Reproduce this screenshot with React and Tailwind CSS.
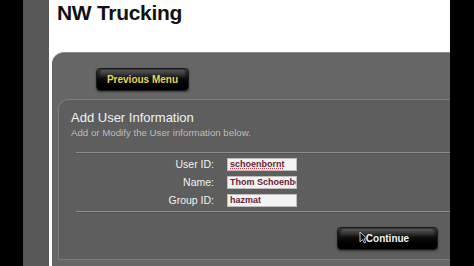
import React from 'react';

const fields = [
    { label: 'User ID:', value: 'schoenbornt', flagged: true },
    { label: 'Name:', value: 'Thom Schoenborn' },
    { label: 'Group ID:', value: 'hazmat' },
];

function GlossButton({ children, className }) {
    return (
        <div
            className={`relative flex items-center justify-center rounded-[4px] border border-[#1a1a1a] bg-gradient-to-b from-[#3a3a3a] via-[#0a0a0a] to-black shadow-[0_1px_2px_rgba(0,0,0,0.5)] ${className}`}
        >
            <div className="absolute inset-x-[3px] top-[1px] h-[40%] rounded-t-[3px] bg-gradient-to-b from-[#6a6a6a] to-transparent opacity-60" />
            {children}
        </div>
    );
}

function FormRow({ label, value, flagged }) {
    return (
        <div className="flex h-[13px] items-center">
            <div className="w-[151px] pr-[13px] text-right text-[10.5px] leading-[13px] text-[#f2f2f2]">{label}</div>
            <div className="h-[13px] w-[70px] overflow-hidden whitespace-nowrap border border-[#bdbdbd] bg-[#f4f2f2] px-[2px] font-bold text-[9px] leading-[11px] text-[#6a2436]">
                {flagged ? (
                    <span className="underline decoration-dotted decoration-[#e0303a]">{value}</span>
                ) : (
                    value
                )}
            </div>
        </div>
    );
}

export default function App() {
    return (
        <div
            className="flex h-[266px] w-[474px] overflow-hidden bg-black"
            style={{ fontFamily: '"Liberation Sans", Arial, sans-serif' }}
        >
            <div className="w-[23px] shrink-0 bg-black" />
            <div className="w-[26px] shrink-0 bg-[#575757]" />
            <div className="flex w-[401px] shrink-0 flex-col overflow-hidden bg-white pl-[3px]">
                <div className="h-[52px] pl-[5px] pt-[1px]">
                    <h1 className="text-[21px] font-bold leading-[24px] tracking-[-0.3px] text-[#111]">NW Trucking</h1>
                </div>
                <div className="flex-1 rounded-tl-[12px] border-t border-[#8a8a8a] bg-[#666666] pt-[15px]">
                    <GlossButton className="ml-[44px] h-[23px] w-[93px]">
                        <span className="relative text-[10px] font-bold text-[#e9d64c]">Previous Menu</span>
                    </GlossButton>
                    <div className="ml-[6px] mt-[8px] rounded-tl-[10px] border-l border-t border-b border-[#7c7c7c] bg-[#5e5e5e] pb-[9px] pl-[12px] pt-[11px]">
                        <div className="text-[13px] leading-[14px] text-[#f2f2f2]">Add User Information</div>
                        <div className="mt-[2px] text-[9.7px] leading-[11px] text-[#bdbdbd]">Add or Modify the User information below.</div>
                        <div className="ml-[5px] mt-[14px] h-[2px] border-t border-[#8e8e8e] bg-[#545454]" />
                        <div className="mt-[4px] flex flex-col gap-[5px] pl-[5px]">
                            {fields.map((f) => (
                                <FormRow key={f.label} {...f} />
                            ))}
                        </div>
                        <div className="ml-[5px] mt-[4px] h-[2px] border-t border-[#8e8e8e] bg-[#545454]" />
                        <div className="mt-[14px] flex justify-end pr-[12px]">
                            <GlossButton className="h-[23px] w-[101px]">
                                <span className="relative text-[10px] font-bold text-[#f4f4f4]">Continue</span>
                                <svg className="absolute left-[21px] top-[3px]" width="9" height="13" viewBox="0 0 9 13">
                                    <path d="M1 1 L1 11 L3.5 8.5 L5.3 12 L6.8 11.3 L5 7.8 L8.2 7.8 Z" fill="#111" stroke="#cfcfcf" strokeWidth="0.9" />
                                </svg>
                            </GlossButton>
                        </div>
                    </div>
                </div>
            </div>
            <div className="flex-1 bg-black" />
        </div>
    );
}
